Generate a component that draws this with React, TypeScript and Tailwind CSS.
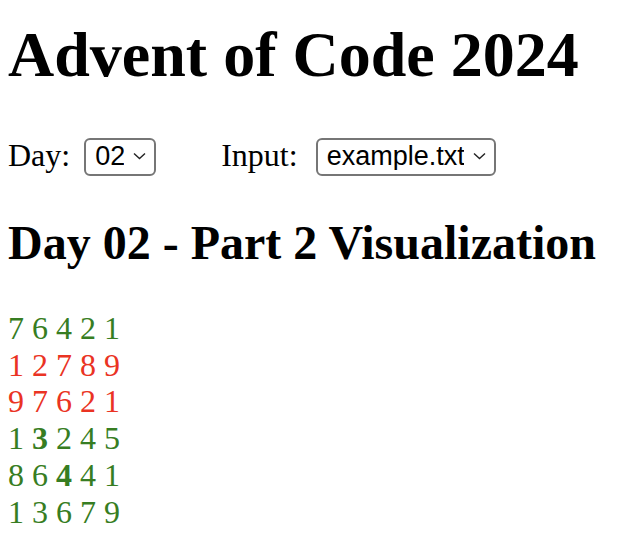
import { useState } from "react";

const rows: { nums: number[]; safe: boolean; bold?: number }[] = [
  { nums: [7, 6, 4, 2, 1], safe: true },
  { nums: [1, 2, 7, 8, 9], safe: false },
  { nums: [9, 7, 6, 2, 1], safe: false },
  { nums: [1, 3, 2, 4, 5], safe: true, bold: 1 },
  { nums: [8, 6, 4, 4, 1], safe: true, bold: 2 },
  { nums: [1, 3, 6, 7, 9], safe: true },
];

function Chevron() {
  return (
    <svg
      width="13"
      height="8"
      viewBox="0 0 13 8"
      className="absolute right-[10px] top-1/2 -translate-y-1/2 pointer-events-none"
    >
      <path d="M1 1.5 L6.5 6.5 L12 1.5" fill="none" stroke="#222" strokeWidth="1.4" />
    </svg>
  );
}

export default function App() {
  const [day, setDay] = useState("02");
  const [input, setInput] = useState("example.txt");

  return (
    <div className="px-2 font-['Liberation_Serif',serif] text-black bg-white min-h-[550px]">
      <h1 className="pt-[18px] text-[64px] leading-[74px] font-bold">Advent of Code 2024</h1>

      {/* Controls */}
      <div className="mt-[44px] flex items-center text-[32px] leading-[36.8px]">
        <span>Day:</span>
        <div className="relative ml-[14px]">
          <select
            value={day}
            onChange={(e) => setDay(e.target.value)}
            className="appearance-none h-[38px] w-[72px] pl-[9px] pr-[30px] border-2 border-[#767676] rounded-[6px] font-['Liberation_Sans',Arial,sans-serif] text-[27px] leading-none text-black bg-white"
          >
            <option>01</option>
            <option>02</option>
            <option>03</option>
          </select>
          <Chevron />
        </div>
        <span className="ml-[65px]">Input:</span>
        <div className="relative ml-[18px]">
          <select
            value={input}
            onChange={(e) => setInput(e.target.value)}
            className="appearance-none h-[38px] w-[180px] pl-[9px] pr-[30px] border-2 border-[#767676] rounded-[6px] font-['Liberation_Sans',Arial,sans-serif] text-[27px] leading-none text-black bg-white"
          >
            <option>example.txt</option>
            <option>input.txt</option>
          </select>
          <Chevron />
        </div>
      </div>

      <h2 className="mt-[39px] text-[48px] leading-[55.2px] font-bold">Day 02 - Part 2 Visualization</h2>

      <div className="mt-[40px] text-[32px] leading-[36.8px]">
        {rows.map((r, i) => (
          <div key={i} className={r.safe ? "text-[#377d22]" : "text-[#ea3323]"}>
            {r.nums.map((n, j) => (
              <span key={j}>
                {j > 0 && " "}
                <span className={r.bold === j ? "font-bold" : ""}>{n}</span>
              </span>
            ))}
          </div>
        ))}
      </div>
    </div>
  );
}
